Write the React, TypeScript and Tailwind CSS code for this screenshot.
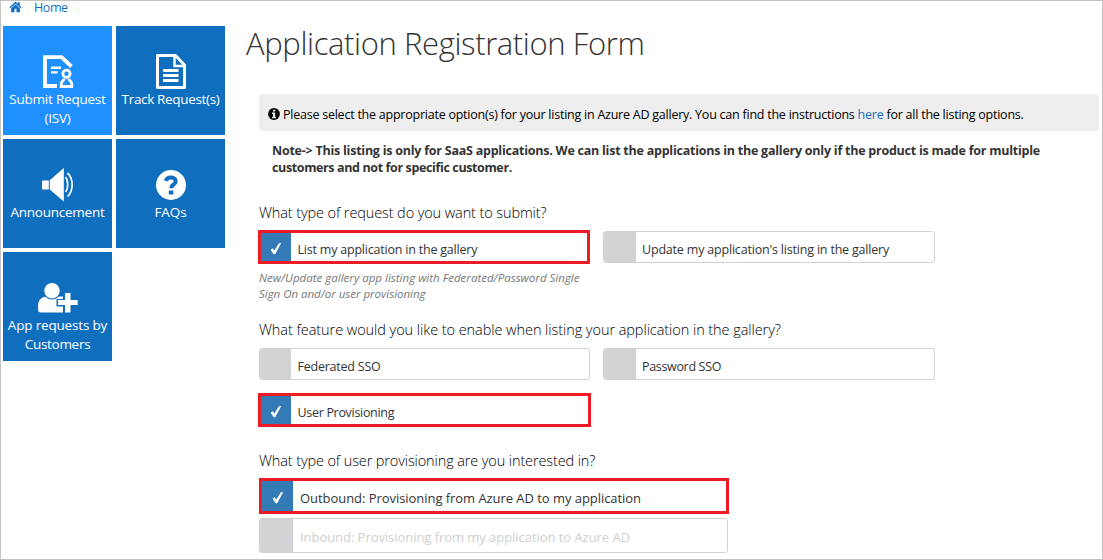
import type { ReactNode } from "react";

function HomeIcon() {
  return (
    <svg width="13" height="12" viewBox="0 0 12 12" fill="#106ebe">
      <path d="M6 .6 0 6.300l1 1L6 2.700l5 4.600 1-1-1.700-1.600V1.200H8.500v1.800z" />
      <path d="M6 3.500 1.600 7.500V11.200h3.400V7.800h2v3.400h3.400V7.500z" />
    </svg>
  );
}

function SubmitIcon() {
  return (
    <svg width="32" height="36" viewBox="42 54 32 36" fill="none" stroke="#fff">
      <path d="M57 86H45V57.200H61.500L71.500 66.500" strokeWidth="3.800" />
      <path d="M51 67.700H61M51 72.400H57.500" strokeWidth="2.400" />
      <circle cx="66.500" cy="73.800" r="3.600" strokeWidth="2.800" />
      <path d="M64.200 78.500C64.200 80.500 61.200 81 61.200 84V86.500H71.800V84C71.800 81 68.800 80.500 68.800 78.500" strokeWidth="2.800" />
    </svg>
  );
}

function TrackIcon() {
  return (
    <svg width="32" height="36" viewBox="155 54 32 36" fill="none" stroke="#fff">
      <path d="M157.500 55.500H175.500L184.500 65V87.500H157.500Z" strokeWidth="3" strokeLinejoin="round" />
      <path d="M174.500 56V66H184.500" strokeWidth="2.400" />
      <path d="M163 70.500H178.500M163 75.500H178.500M163 80.500H178.500" strokeWidth="2.800" />
    </svg>
  );
}

function SpeakerIcon() {
  return (
    <svg width="34" height="36" viewBox="40 167 34 36" fill="#fff">
      <path d="M42 180.500H47.800V189.500H42Q41 189.500 41 188.500V181.500Q41 180.500 42 180.500Z" />
      <path d="M48.800 180.300 62.800 168V201.500L48.800 189.600Z" />
      <g fill="none" stroke="#fff" strokeWidth="1.700">
        <path d="M64.500 177C67.500 180.500 67.500 188.500 64.500 192" />
        <path d="M66.500 172.800C72.700 179 72.700 190.500 66.500 196.500" />
      </g>
    </svg>
  );
}

function QuestionIcon() {
  return (
    <svg width="32" height="36" viewBox="155 167 32 36">
      <circle cx="171" cy="185" r="15" fill="#fff" />
      <path d="M166 181C166.500 178.500 168.300 177.500 170.800 177.500C173.800 177.500 175.700 179 175.700 181.200C175.700 184.300 171.200 184.500 171.200 188.200" fill="none" stroke="#106ebe" strokeWidth="4" />
      <path d="M168.800 190.500H173.400V194.500H168.800Z" fill="#106ebe" />
    </svg>
  );
}

function AddUserIcon() {
  return (
    <svg width="44" height="36" viewBox="36 280 44 36" fill="#fff">
      <path d="M46 296.500C40 297.500 38 301 38 307V309.500Q38 312.500 41 312.500H63V296.500H58C55 299.500 49 299.500 46 296.500Z" />
      <circle cx="52" cy="290.700" r="8.300" stroke="#106ebe" strokeWidth="1.200" />
      <path d="M64 292H72.500V299H79V306.500H72.500V313.500H64V306.500H56.500V299H64Z" fill="#106ebe" />
      <path d="M65 293H70.500V300H77.700V305H70.500V312.500H65V305H58V300H65Z" />
    </svg>
  );
}

function InfoIcon() {
  return (
    <svg width="12" height="12" viewBox="0 0 11 11">
      <circle cx="5.500" cy="5.500" r="5.400" fill="#000" />
      <path d="M4.500 1.500H6.600V3.200H4.500ZM3.700 4.200H6.600V8.200H7.400V9.400H3.700V8.200H4.500V5.400H3.700Z" fill="#eee" />
    </svg>
  );
}

function CheckIcon() {
  return (
    <svg width="12" height="13" viewBox="0 0 12 13" fill="#fff">
      <path d="M.6 7.700 2.700 6.300 4.400 8.600 8.900 1.300 11.200 1 5.200 12.200H3.700Z" />
    </svg>
  );
}

function Tile({ icon, active, children }: { icon: ReactNode; active?: boolean; children: ReactNode }) {
  return (
    <div className={`flex h-[109px] w-[109px] flex-col items-center whitespace-nowrap pt-7 text-center text-[13.5px] leading-[19px] text-white ${active ? "bg-[#1e90ff]" : "bg-[#106ebe]"}`}>
      <div className="flex h-9 justify-center">{icon}</div>
      {children}
    </div>
  );
}

function Option({ checked, disabled, box, swatch, label, children }: { checked?: boolean; disabled?: boolean; box: string; swatch: string; label: string; children: string }) {
  return (
    <div className={`flex shrink-0 overflow-hidden whitespace-nowrap bg-white ${checked ? "border-[3px] border-[#ed1c24]" : "rounded-[3px] border border-[#d1d2d4]"} ${box}`}>
      <div className={`flex shrink-0 items-center justify-center ${checked ? "bg-[#337ab7] pt-0.5" : "bg-[#d1d2d4]"} ${swatch}`}>
        {checked && <CheckIcon />}
      </div>
      <span className={`leading-[18px] ${disabled ? "text-[#cfcfcf]" : "text-[#333]"} ${label}`}>{children}</span>
    </div>
  );
}

const question = "h-5 whitespace-nowrap pt-px text-[14.5px] leading-5 font-light text-black";

export default function App() {
  return (
    <div className="flex h-[560px] w-[1103px] flex-col overflow-hidden border border-[#c3c3c3] bg-white font-['Open_Sans','Noto_Sans',sans-serif]">
      <div className="flex min-h-0 flex-1">
        <aside className="w-[245px] shrink-0 pl-0.5">
          <nav className="flex h-[25px] items-start pl-[6px] text-[12.5px] leading-[14px] text-[#106ebe]">
            <HomeIcon />
            <a className="ml-3 tracking-[-0.4px]">Home</a>
          </nav>
          <div className="grid w-[222px] grid-cols-[109px_109px] gap-1">
            <Tile active icon={<SubmitIcon />}>
              <span className="tracking-[-0.22px]">Submit Request</span>
              <span className="tracking-[-0.2px]">(ISV)</span>
            </Tile>
            <Tile icon={<TrackIcon />}>
              <span className="tracking-[-0.34px]">Track Request(s)</span>
            </Tile>
            <Tile icon={<SpeakerIcon />}>
              <span className="tracking-[-0.25px]">Announcement</span>
            </Tile>
            <Tile icon={<QuestionIcon />}>
              <span className="tracking-[-0.1px]">FAQs</span>
            </Tile>
            <Tile icon={<AddUserIcon />}>
              <span className="tracking-[-0.18px]">App requests by</span>
              <span className="tracking-[-0.28px]">Customers</span>
            </Tile>
          </div>
        </aside>
        <main className="flex min-w-0 flex-1 flex-col pt-[22px]">
          <h1 className="h-10 whitespace-nowrap text-[31px] leading-10 font-light tracking-[-0.38px] text-[#333]">Application Registration Form</h1>
          <div className="flex flex-col pl-[13px]">
            <div className="mt-[31px] flex h-[37px] w-[840px] items-start rounded bg-[#eee] pt-3 pl-[9px] text-[12.5px] leading-[18px] whitespace-nowrap text-black">
              <span className="mt-0.5 mr-[3px]"><InfoIcon /></span>
              <p className="tracking-[-0.237px]">
                Please select the appropriate option(s) for your listing in Azure AD gallery. You can find the instructions <a className="text-[#1f6fc4]">here</a> for all the listing options.
              </p>
            </div>
            <p className="mt-[11px] flex h-[34px] flex-col pl-[13px] text-[12.5px] leading-[17px] font-bold whitespace-nowrap text-[#333]">
              <span className="tracking-[-0.238px]">Note-&gt; This listing is only for SaaS applications. We can list the applications in the gallery only if the product is made for multiple</span>
              <span className="tracking-[-0.375px]">customers and not for specific customer.</span>
            </p>
            <h2 className={`mt-[26px] tracking-[-0.11px] ${question}`}>What type of request do you want to submit?</h2>
            <div className="mt-2 -ml-px flex h-[34px] items-center gap-[13px]">
              <Option checked box="h-[34px] w-[332px]" swatch="w-[30px]" label="pt-2 pl-[6.5px] text-[12.5px] tracking-[-0.21px]">List my application in the gallery</Option>
              <Option box="h-8 w-[332px]" swatch="w-8" label="pt-[9px] pl-[6px] text-[12.5px] tracking-[-0.19px]">Update my application's listing in the gallery</Option>
            </div>
            <p className="mt-1.5 flex h-8 flex-col text-[11.5px] leading-4 whitespace-nowrap text-[#777] italic">
              <span className="tracking-[0.01px]">New/Update gallery app listing with Federated/Password Single</span>
              <span className="tracking-[-0.02px]">Sign On and/or user provisioning</span>
            </p>
            <h2 className={`mt-[17px] tracking-[-0.065px] ${question}`}>What feature would you like to enable when listing your application in the gallery?</h2>
            <div className="mt-[9px] flex h-8 gap-[13px]">
              <Option box="h-8 w-[331px]" swatch="w-[31px]" label="pt-[9px] pl-[6.5px] text-[12.5px] tracking-[-0.23px]">Federated SSO</Option>
              <Option box="h-8 w-[332px]" swatch="w-8" label="pt-[9px] pl-[6px] text-[12.5px] tracking-[-0.33px]">Password SSO</Option>
            </div>
            <Option checked box="mt-[13px] -ml-px h-[34px] w-[333px]" swatch="w-[30px]" label="pt-2 pl-[6.5px] text-[12.5px] tracking-[-0.31px]">User Provisioning</Option>
            <h2 className={`mt-[23px] tracking-[-0.12px] ${question}`}>What type of user provisioning are you interested in?</h2>
            <Option checked box="mt-2 h-9 w-[470px]" swatch="w-[31px]" label="pt-2 pl-[7px] text-[13px] tracking-[-0.05px]">Outbound: Provisioning from Azure AD to my application</Option>
            <Option disabled box="mt-1 h-[35px] w-[469px]" swatch="w-[33px]" label="pt-[9px] pl-[7px] text-[13px] tracking-[-0.05px]">Inbound: Provisioning from my application to Azure AD</Option>
          </div>
        </main>
      </div>
    </div>
  );
}
